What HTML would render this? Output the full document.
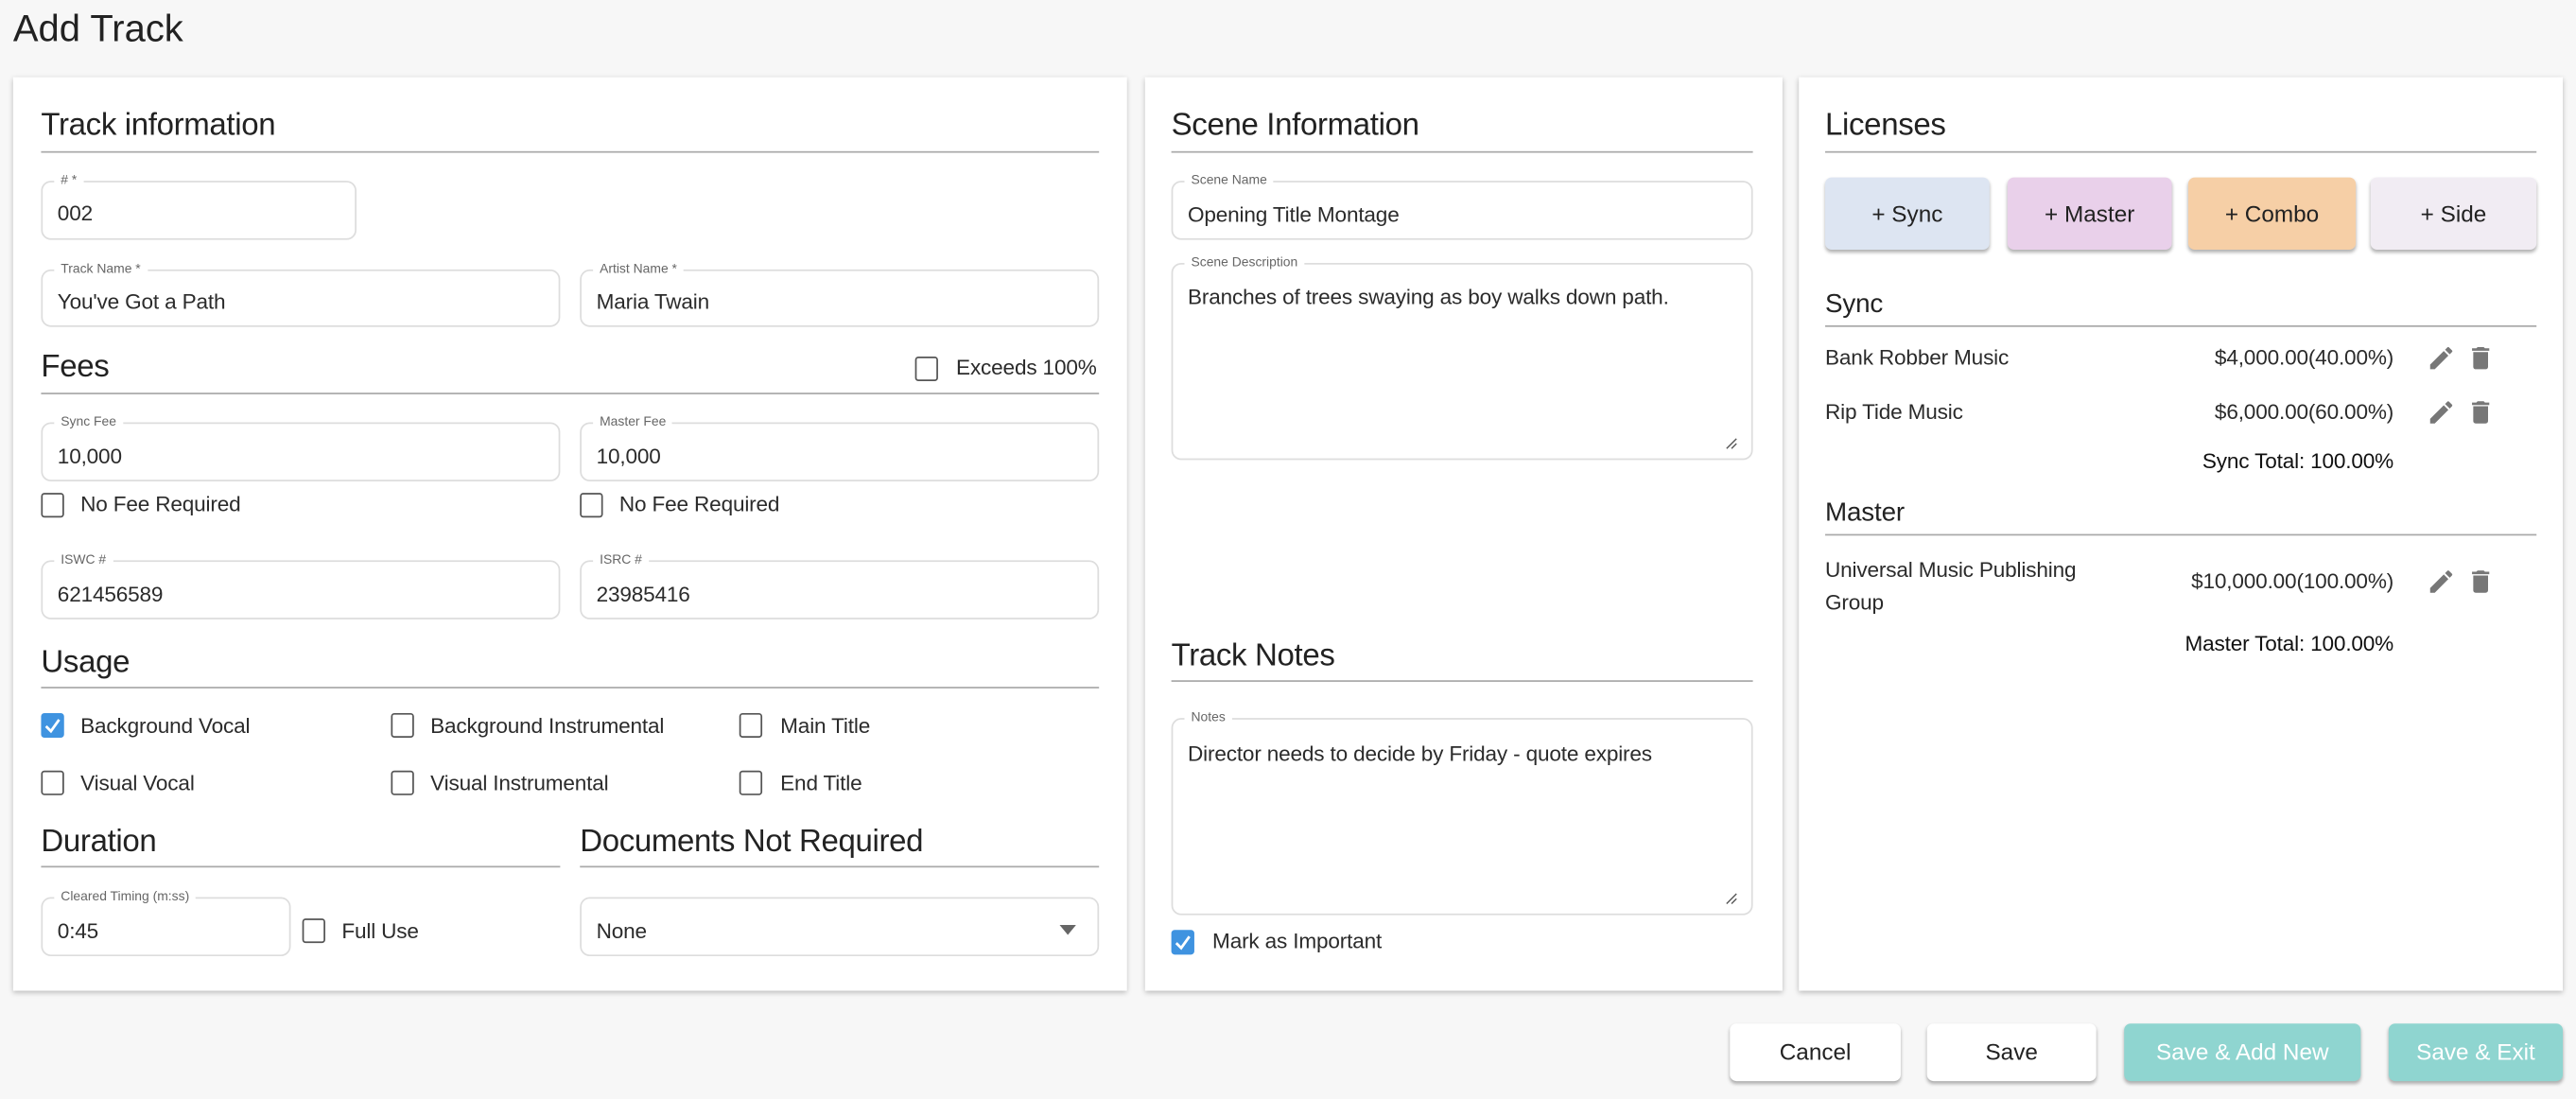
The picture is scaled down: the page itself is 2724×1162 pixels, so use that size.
<!DOCTYPE html>
<html><head><meta charset="utf-8">
<style>
html,body{margin:0;padding:0;width:2724px;height:1162px;overflow:hidden;background:#f7f7f7;}
#s{position:absolute;left:0;top:0;width:1568px;height:669px;transform:scale(1.7372);transform-origin:0 0;font-family:"Liberation Sans",sans-serif;color:#2b2b2b;}
.a{position:absolute;}
.panel{position:absolute;background:#fff;box-shadow:0 1px 3px rgba(0,0,0,.25);}
.h{position:absolute;font-size:19px;line-height:24px;color:#222;white-space:nowrap;letter-spacing:-0.2px;}
.ln{position:absolute;height:1px;background:#aaa;}
.f{position:absolute;border:1px solid #ddd;border-radius:6px;box-sizing:border-box;}
.f .l{position:absolute;left:7px;top:-6px;background:#fff;padding:0 4px;font-size:8px;line-height:10px;color:#666;white-space:nowrap;}
.f .v{position:absolute;left:9px;font-size:13px;color:#2b2b2b;white-space:nowrap;letter-spacing:-0.1px;}
.cb{position:absolute;width:14px;height:15px;border:1.3px solid #555;border-radius:2px;box-sizing:border-box;}
.cb.on{background:#3f93e0;border-color:#3f93e0;}
.t{position:absolute;font-size:13px;line-height:16px;white-space:nowrap;color:#2b2b2b;letter-spacing:-0.1px;}
.btn{position:absolute;border-radius:4px;box-shadow:0 1.5px 2px rgba(0,0,0,.3);text-align:center;font-size:14px;color:#222;}
.r{position:absolute;font-size:13px;text-align:right;white-space:nowrap;letter-spacing:-0.1px;}
.ic{position:absolute;width:18px;height:18px;}
</style></head><body>
<div id="s">
<div class="a" style="left:8px;top:4px;font-size:23px;color:#222;">Add Track</div>

<div class="panel" style="left:8px;top:47px;width:678px;height:556px;"></div>
<div class="panel" style="left:697px;top:47px;width:388px;height:556px;"></div>
<div class="panel" style="left:1095px;top:47px;width:465px;height:556px;"></div>

<div class="h" style="left:25px;top:65px;">Track information</div>
<div class="ln" style="left:25px;top:92px;width:644px;"></div>
<div class="f" style="left:25px;top:110px;width:192px;height:36px;"><span class="l"># *</span><span class="v" style="top:11px">002</span></div>
<div class="f" style="left:25px;top:164px;width:316px;height:35px;"><span class="l">Track Name *</span><span class="v" style="top:11px">You've Got a Path</span></div>
<div class="f" style="left:353px;top:164px;width:316px;height:35px;"><span class="l">Artist Name *</span><span class="v" style="top:11px">Maria Twain</span></div>
<div class="h" style="left:25px;top:212px;">Fees</div>
<div class="cb" style="left:557px;top:217px;"></div><div class="t" style="left:582px;top:216px;">Exceeds 100%</div>
<div class="ln" style="left:25px;top:239px;width:644px;"></div>
<div class="f" style="left:25px;top:257px;width:316px;height:36px;"><span class="l">Sync Fee</span><span class="v" style="top:12px">10,000</span></div>
<div class="f" style="left:353px;top:257px;width:316px;height:36px;"><span class="l">Master Fee</span><span class="v" style="top:12px">10,000</span></div>
<div class="cb" style="left:25px;top:300px;"></div><div class="t" style="left:49px;top:299px;">No Fee Required</div>
<div class="cb" style="left:353px;top:300px;"></div><div class="t" style="left:377px;top:299px;">No Fee Required</div>
<div class="f" style="left:25px;top:341px;width:316px;height:36px;"><span class="l">ISWC #</span><span class="v" style="top:12px">621456589</span></div>
<div class="f" style="left:353px;top:341px;width:316px;height:36px;"><span class="l">ISRC #</span><span class="v" style="top:12px">23985416</span></div>
<div class="h" style="left:25px;top:392px;">Usage</div>
<div class="ln" style="left:25px;top:418px;width:644px;"></div>
<div class="cb on" style="left:25px;top:434px;"><svg width="14" height="15" viewBox="0 0 14 15" style="position:absolute;left:-1px;top:-1px"><path d="M3 8 L6 11 L11 4" stroke="#fff" stroke-width="1.6" fill="none"/></svg></div><div class="t" style="left:49px;top:434px;">Background Vocal</div>
<div class="cb" style="left:238px;top:434px;"></div><div class="t" style="left:262px;top:434px;">Background Instrumental</div>
<div class="cb" style="left:450px;top:434px;"></div><div class="t" style="left:475px;top:434px;">Main Title</div>
<div class="cb" style="left:25px;top:469px;"></div><div class="t" style="left:49px;top:469px;">Visual Vocal</div>
<div class="cb" style="left:238px;top:469px;"></div><div class="t" style="left:262px;top:469px;">Visual Instrumental</div>
<div class="cb" style="left:450px;top:469px;"></div><div class="t" style="left:475px;top:469px;">End Title</div>
<div class="h" style="left:25px;top:501px;">Duration</div>
<div class="ln" style="left:25px;top:527px;width:316px;"></div>
<div class="h" style="left:353px;top:501px;">Documents Not Required</div>
<div class="ln" style="left:353px;top:527px;width:316px;"></div>
<div class="f" style="left:25px;top:546px;width:152px;height:36px;"><span class="l">Cleared Timing (m:ss)</span><span class="v" style="top:12px">0:45</span></div>
<div class="cb" style="left:184px;top:559px;"></div><div class="t" style="left:208px;top:559px;">Full Use</div>
<div class="f" style="left:353px;top:546px;width:316px;height:36px;"><span class="v" style="top:12px">None</span><svg class="a" style="left:291px;top:16px" width="10" height="6"><path d="M0 0 L10 0 L5 6Z" fill="#666"/></svg></div>

<div class="h" style="left:713px;top:65px;">Scene Information</div>
<div class="ln" style="left:713px;top:92px;width:354px;"></div>
<div class="f" style="left:713px;top:110px;width:354px;height:36px;"><span class="l">Scene Name</span><span class="v" style="top:12px">Opening Title Montage</span></div>
<div class="f" style="left:713px;top:160px;width:354px;height:120px;"><span class="l">Scene Description</span><span class="v" style="top:12px">Branches of trees swaying as boy walks down path.</span><svg class="a" style="right:8px;bottom:5px" width="8" height="8"><path d="M1 7 L7 1 M4 7 L7 4" stroke="#555" stroke-width=".8"/></svg></div>
<div class="h" style="left:713px;top:388px;">Track Notes</div>
<div class="ln" style="left:713px;top:414px;width:354px;"></div>
<div class="f" style="left:713px;top:437px;width:354px;height:120px;"><span class="l">Notes</span><span class="v" style="top:13px">Director needs to decide by Friday - quote expires</span><svg class="a" style="right:8px;bottom:5px" width="8" height="8"><path d="M1 7 L7 1 M4 7 L7 4" stroke="#555" stroke-width=".8"/></svg></div>
<div class="cb on" style="left:713px;top:566px;"><svg width="14" height="15" viewBox="0 0 14 15" style="position:absolute;left:-1px;top:-1px"><path d="M3 8 L6 11 L11 4" stroke="#fff" stroke-width="1.6" fill="none"/></svg></div><div class="t" style="left:738px;top:565px;">Mark as Important</div>

<div class="h" style="left:1111px;top:65px;">Licenses</div>
<div class="ln" style="left:1111px;top:92px;width:433px;"></div>
<div class="btn" style="left:1111px;top:108px;width:100px;height:44px;line-height:44px;background:#dde5f2;">+ Sync</div>
<div class="btn" style="left:1222px;top:108px;width:100px;height:44px;line-height:44px;background:#e9d0ea;">+ Master</div>
<div class="btn" style="left:1332px;top:108px;width:102px;height:44px;line-height:44px;background:#f6cfa6;">+ Combo</div>
<div class="btn" style="left:1443px;top:108px;width:101px;height:44px;line-height:44px;background:#f1ecf3;">+ Side</div>
<div class="t" style="left:1111px;top:176px;font-size:16px;line-height:20px;color:#222;">Sync</div>
<div class="ln" style="left:1111px;top:198px;width:433px;"></div>
<div class="t" style="left:1111px;top:210px;">Bank Robber Music</div>
<div class="r" style="right:111px;top:210px;">$4,000.00(40.00%)</div>
<div class="t" style="left:1111px;top:243px;">Rip Tide Music</div>
<div class="r" style="right:111px;top:243px;">$6,000.00(60.00%)</div>
<div class="r" style="right:111px;top:273px;color:#111;">Sync Total: 100.00%</div>
<div class="t" style="left:1111px;top:303px;font-size:16px;line-height:20px;color:#222;">Master</div>
<div class="ln" style="left:1111px;top:325px;width:433px;"></div>
<div class="t" style="left:1111px;top:337px;line-height:20px;">Universal Music Publishing<br>Group</div>
<div class="r" style="right:111px;top:346px;">$10,000.00(100.00%)</div>
<div class="r" style="right:111px;top:384px;color:#111;">Master Total: 100.00%</div>
<svg class="ic" style="left:1477px;top:209px" viewBox="0 0 24 24"><path fill="#777" d="M3 17.25V21h3.75L17.81 9.94l-3.75-3.75L3 17.25zM20.71 7.04a1 1 0 000-1.41l-2.34-2.34a1 1 0 00-1.41 0l-1.83 1.83 3.75 3.75 1.83-1.83z"/></svg>
<svg class="ic" style="left:1501px;top:209px" viewBox="0 0 24 24"><path fill="#777" d="M6 19c0 1.1.9 2 2 2h8c1.1 0 2-.9 2-2V7H6v12zM19 4h-3.5l-1-1h-5l-1 1H5v2h14V4z"/></svg>
<svg class="ic" style="left:1477px;top:242px" viewBox="0 0 24 24"><path fill="#777" d="M3 17.25V21h3.75L17.81 9.94l-3.75-3.75L3 17.25zM20.71 7.04a1 1 0 000-1.41l-2.34-2.34a1 1 0 00-1.41 0l-1.83 1.83 3.75 3.75 1.83-1.83z"/></svg>
<svg class="ic" style="left:1501px;top:242px" viewBox="0 0 24 24"><path fill="#777" d="M6 19c0 1.1.9 2 2 2h8c1.1 0 2-.9 2-2V7H6v12zM19 4h-3.5l-1-1h-5l-1 1H5v2h14V4z"/></svg>
<svg class="ic" style="left:1477px;top:345px" viewBox="0 0 24 24"><path fill="#777" d="M3 17.25V21h3.75L17.81 9.94l-3.75-3.75L3 17.25zM20.71 7.04a1 1 0 000-1.41l-2.34-2.34a1 1 0 00-1.41 0l-1.83 1.83 3.75 3.75 1.83-1.83z"/></svg>
<svg class="ic" style="left:1501px;top:345px" viewBox="0 0 24 24"><path fill="#777" d="M6 19c0 1.1.9 2 2 2h8c1.1 0 2-.9 2-2V7H6v12zM19 4h-3.5l-1-1h-5l-1 1H5v2h14V4z"/></svg>

<div class="btn" style="left:1053px;top:623px;width:104px;height:35px;line-height:35px;background:#fff;">Cancel</div>
<div class="btn" style="left:1173px;top:623px;width:103px;height:35px;line-height:35px;background:#fff;">Save</div>
<div class="btn" style="left:1293px;top:623px;width:144px;height:35px;line-height:35px;background:#8fd5d0;color:#fff;">Save &amp; Add New</div>
<div class="btn" style="left:1454px;top:623px;width:106px;height:35px;line-height:35px;background:#8fd5d0;color:#fff;">Save &amp; Exit</div>
</div>
</body></html>
